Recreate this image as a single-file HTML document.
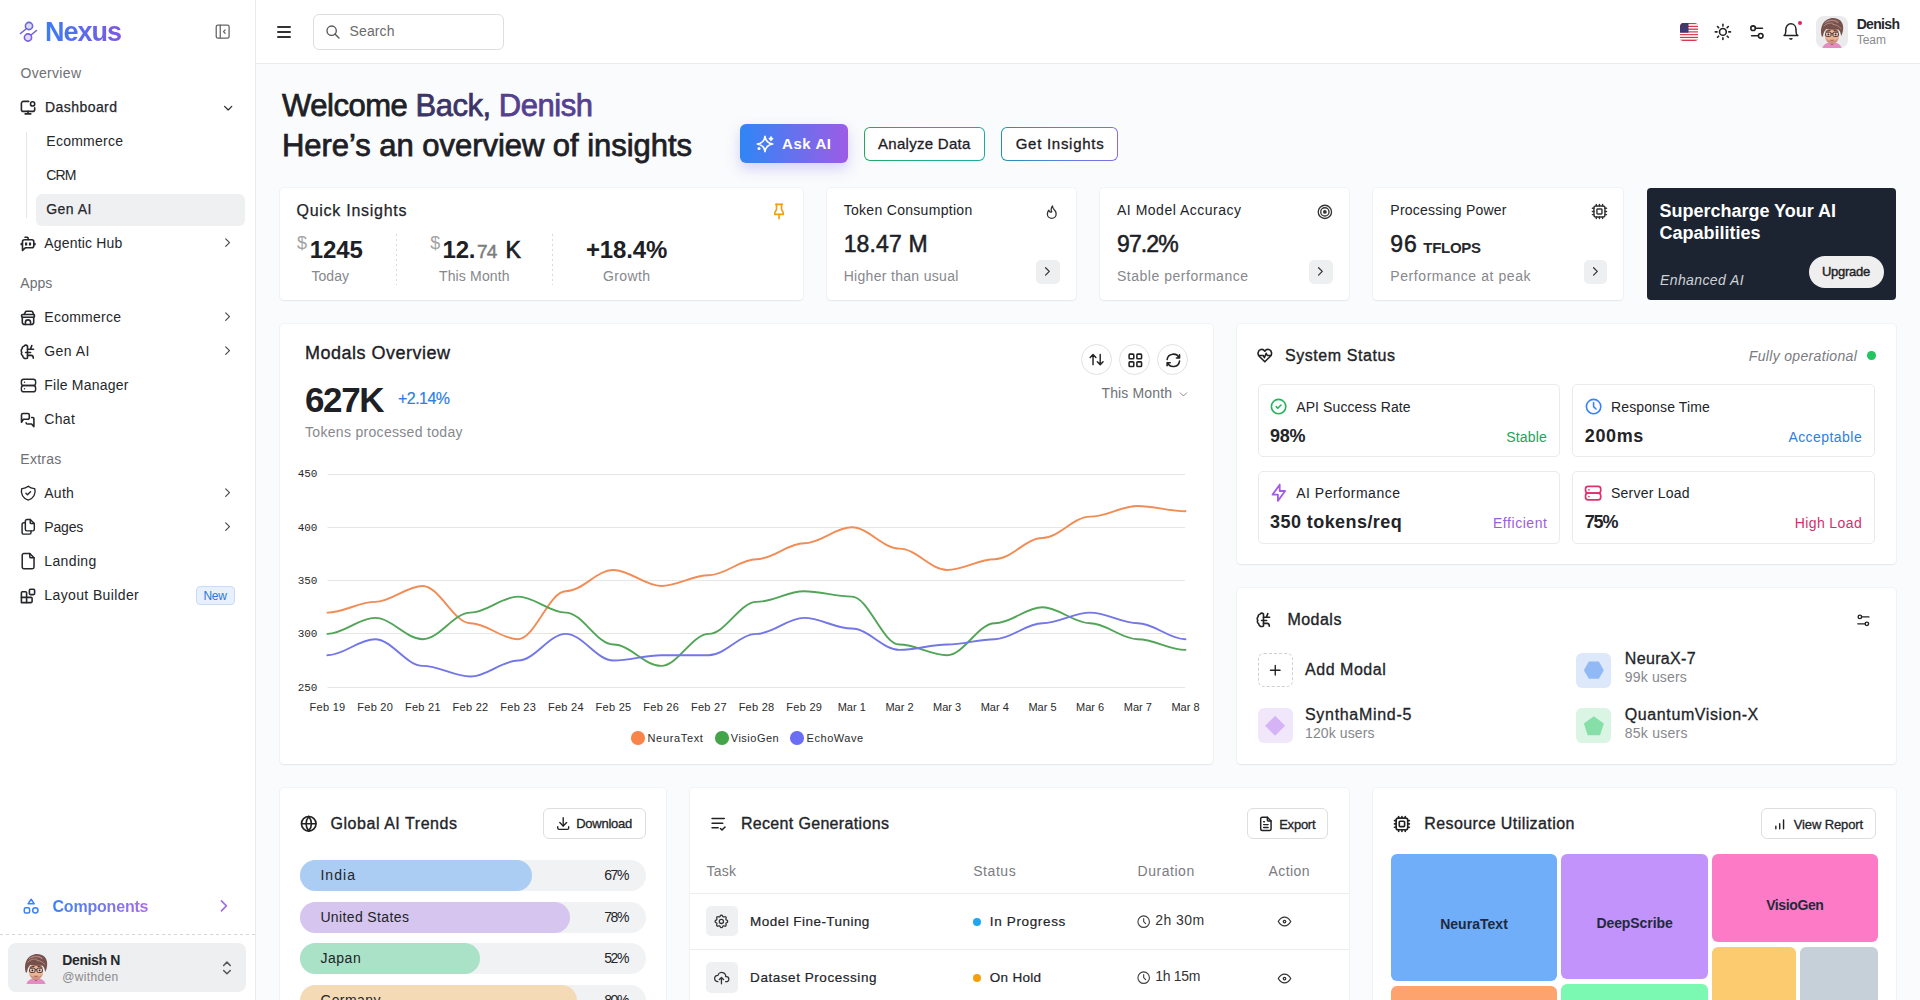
<!DOCTYPE html><html><head><meta charset="utf-8"><title>Nexus Dashboard</title><style>html,body{margin:0;padding:0;}body{width:1920px;height:1000px;overflow:hidden;position:relative;background:#fafbfc;font-family:"Liberation Sans",sans-serif;}.t{position:absolute;white-space:nowrap;}</style></head><body><div style="position:absolute;left:0.00px;top:0.00px;width:256.00px;height:1000.00px;background:#fff;border-right:1px solid #ebebeb;box-sizing:border-box;"></div><svg style="position:absolute;left:18.00px;top:20.00px;width:22px;height:24px;overflow:visible;" viewBox="0 0 22 24"><line x1="26" y1="29" x2="20.5" y2="33.5" stroke="#6a63e0" stroke-width="1.6" stroke-linecap="round" transform="translate(-18,-20)"/><line x1="31" y1="35" x2="36.5" y2="30.5" stroke="#6a63e0" stroke-width="1.6" stroke-linecap="round" transform="translate(-18,-20)"/><circle cx="11" cy="6" r="3.6" fill="#dcdcfa" stroke="#6a63e0" stroke-width="1.6"/><circle cx="10" cy="17.5" r="3.6" fill="#e3d9f8" stroke="#7a5ee0" stroke-width="1.6"/></svg><div class="t" style="left:45.00px;top:18.64px;font-family:'Liberation Sans', sans-serif;font-size:27px;line-height:27px;font-weight:700;color:#1c2024;letter-spacing:-1.012px;background:linear-gradient(90deg,#3b7cf6,#7d58e4);-webkit-background-clip:text;background-clip:text;color:transparent;"><span>Nexus</span></div><svg style="position:absolute;left:213.33px;top:21.83px;width:19.33px;height:19.33px;overflow:visible;color:#666;" viewBox="0 0 24 24" fill="none" stroke="#666" stroke-width="1.6" stroke-linecap="round" stroke-linejoin="round"><rect x="4" y="4" width="16" height="16" rx="2"/><path d="M9 4v16"/><path d="M15 10l-2 2l2 2"/></svg><div class="t" style="left:20.50px;top:66.15px;font-family:'Liberation Sans', sans-serif;font-size:14px;line-height:14px;font-weight:400;color:#6e7073;letter-spacing:0.306px;"><span>Overview</span></div><svg style="position:absolute;left:16.00px;top:96.00px;width:24.00px;height:24.00px;overflow:visible" viewBox="0 0 24 24" fill="none" stroke="#25272b" stroke-width="1.600" stroke-linecap="round" stroke-linejoin="round"><path d="M12.7 5.4H7.4a2 2 0 0 0-2 2v6a2 2 0 0 0 2 2h9.3a2 2 0 0 0 2-2v-1.6"/><circle cx="16.6" cy="7.9" r="2.1"/><path d="M12 15.4v2.5M9.1 17.9h5.7"/></svg><div class="t" style="left:45.00px;top:100.15px;font-family:'Liberation Sans', sans-serif;font-size:14px;line-height:14px;font-weight:400;color:#25272b;letter-spacing:0.438px;-webkit-text-stroke:0.25px #25272b;"><span>Dashboard</span></div><svg style="position:absolute;left:220.82px;top:100.82px;width:14.36px;height:14.36px;overflow:visible;color:#25272b;" viewBox="0 0 24 24" fill="none" stroke="#25272b" stroke-width="2" stroke-linecap="round" stroke-linejoin="round"><path d="M6 9l6 6l6-6"/></svg><div style="position:absolute;left:26.00px;top:132.00px;width:1.00px;height:86.00px;background:#e6e6e6;"></div><div style="position:absolute;left:36.00px;top:194.00px;width:209.00px;height:31.50px;background:#eff0f2;border-radius:6px;"></div><div class="t" style="left:46.30px;top:134.15px;font-family:'Liberation Sans', sans-serif;font-size:14px;line-height:14px;font-weight:400;color:#25272b;letter-spacing:0.252px;"><span>Ecommerce</span></div><div class="t" style="left:46.30px;top:168.15px;font-family:'Liberation Sans', sans-serif;font-size:14px;line-height:14px;font-weight:400;color:#25272b;letter-spacing:-0.945px;"><span>CRM</span></div><div class="t" style="left:46.30px;top:202.15px;font-family:'Liberation Sans', sans-serif;font-size:14px;line-height:14px;font-weight:400;color:#25272b;letter-spacing:0.438px;-webkit-text-stroke:0.25px #25272b;"><span>Gen AI</span></div><svg style="position:absolute;left:16.00px;top:232.00px;width:24.00px;height:24.00px;overflow:visible" viewBox="0 0 24 24" fill="none" stroke="#25272b" stroke-width="1.600" stroke-linecap="round" stroke-linejoin="round"><path d="M6.5 18.5V9.7a2 2 0 0 1 2-2h7.3a2 2 0 0 1 2 2v4.1a2 2 0 0 1-2 2h-6.5z"/><path d="M9 5.3h2.3q.8 0 .8.8v1.5"/><path d="M10.1 11.7v.6M14 11.7v.6" stroke-width="2.2" stroke-linecap="square"/><path d="M5.3 11.5v1.3M18.9 11.5v1.3"/></svg><div class="t" style="left:44.30px;top:236.15px;font-family:'Liberation Sans', sans-serif;font-size:14px;line-height:14px;font-weight:400;color:#25272b;letter-spacing:0.172px;"><span>Agentic Hub</span></div><svg style="position:absolute;left:220.39px;top:235.39px;width:15.21px;height:15.21px;overflow:visible;color:#444;" viewBox="0 0 24 24" fill="none" stroke="#444" stroke-width="1.8" stroke-linecap="round" stroke-linejoin="round"><path d="M9 6l6 6l-6 6"/></svg><div class="t" style="left:20.30px;top:276.15px;font-family:'Liberation Sans', sans-serif;font-size:14px;line-height:14px;font-weight:400;color:#6e7073;letter-spacing:0.026px;"><span>Apps</span></div><svg style="position:absolute;left:16.00px;top:306.00px;width:24.00px;height:24.00px;overflow:visible" viewBox="0 0 24 24" fill="none" stroke="#25272b" stroke-width="1.600" stroke-linecap="round" stroke-linejoin="round"><path d="M8.2 8.5L9.6 5.6Q9.8 5.3 10.2 5.3H15.8Q16.2 5.3 16.4 5.6L17.8 8.5"/><path d="M6.7 8.5H17.3a1.2 1.2 0 0 1 1.2 1.2v.4a1.2 1.2 0 0 1-1.2 1.2H6.7a1.2 1.2 0 0 1-1.2-1.2v-.4a1.2 1.2 0 0 1 1.2-1.2z"/><path d="M6.3 11.3V16.3a2.2 2.2 0 0 0 2.2 2.2h7a2.2 2.2 0 0 0 2.2-2.2V11.3"/><path d="M9.4 18.5V16.5a2.6 2.6 0 0 1 5.2 0V18.5"/></svg><div class="t" style="left:44.30px;top:310.15px;font-family:'Liberation Sans', sans-serif;font-size:14px;line-height:14px;font-weight:400;color:#25272b;letter-spacing:0.252px;"><span>Ecommerce</span></div><svg style="position:absolute;left:220.39px;top:309.39px;width:15.21px;height:15.21px;overflow:visible;color:#444;" viewBox="0 0 24 24" fill="none" stroke="#444" stroke-width="1.8" stroke-linecap="round" stroke-linejoin="round"><path d="M9 6l6 6l-6 6"/></svg><svg style="position:absolute;left:16.00px;top:340.00px;width:24.00px;height:24.00px;overflow:visible" viewBox="0 0 24 24" fill="none" stroke="#25272b" stroke-width="1.600" stroke-linecap="round" stroke-linejoin="round"><path d="M11.5 6C10.5 4.9 8.6 4.8 8 6.2C6.6 6.4 5.9 7.6 6.2 8.7C5 9.5 4.9 11.3 5.8 12.2C5 13.4 5.3 15.2 6.6 15.6C6.8 17.3 8.5 18.9 10 18.5C10.8 18.6 11.3 18.2 11.5 17.8Z"/><path d="M11.5 9.2H17.6M14.4 9.2L15.8 5.6M9.6 12.5H14.6M11.5 15.4H15.3Q17.3 15.4 17.3 18.2"/></svg><div class="t" style="left:44.30px;top:344.15px;font-family:'Liberation Sans', sans-serif;font-size:14px;line-height:14px;font-weight:400;color:#25272b;letter-spacing:0.438px;"><span>Gen AI</span></div><svg style="position:absolute;left:220.39px;top:343.39px;width:15.21px;height:15.21px;overflow:visible;color:#444;" viewBox="0 0 24 24" fill="none" stroke="#444" stroke-width="1.8" stroke-linecap="round" stroke-linejoin="round"><path d="M9 6l6 6l-6 6"/></svg><svg style="position:absolute;left:18.50px;top:375.50px;width:19.00px;height:19.00px;overflow:visible;color:#25272b;" viewBox="0 0 24 24" fill="none" stroke="#25272b" stroke-width="1.8" stroke-linecap="round" stroke-linejoin="round"><rect x="3" y="4" width="18" height="8" rx="3"/><rect x="3" y="12" width="18" height="8" rx="3"/><path d="M7 8v.01M7 16v.01"/></svg><div class="t" style="left:44.30px;top:378.15px;font-family:'Liberation Sans', sans-serif;font-size:14px;line-height:14px;font-weight:400;color:#25272b;letter-spacing:0.209px;"><span>File Manager</span></div><svg style="position:absolute;left:16.00px;top:408.00px;width:24.00px;height:24.00px;overflow:visible" viewBox="0 0 24 24" fill="none" stroke="#25272b" stroke-width="1.600" stroke-linecap="round" stroke-linejoin="round"><path d="M5.5 14.2V7a1.5 1.5 0 0 1 1.5-1.5h4.8a1.5 1.5 0 0 1 1.5 1.5v2.8a1.5 1.5 0 0 1-1.5 1.5h-4.4z"/><path d="M15.6 9.5h1.1a1.2 1.2 0 0 1 1.2 1.2V18.6l-2.3-2.6H11.4a1.3 1.3 0 0 1-1.3-1.3"/></svg><div class="t" style="left:44.30px;top:412.15px;font-family:'Liberation Sans', sans-serif;font-size:14px;line-height:14px;font-weight:400;color:#25272b;letter-spacing:0.307px;"><span>Chat</span></div><div class="t" style="left:20.30px;top:452.15px;font-family:'Liberation Sans', sans-serif;font-size:14px;line-height:14px;font-weight:400;color:#6e7073;letter-spacing:0.263px;"><span>Extras</span></div><svg style="position:absolute;left:18.76px;top:483.76px;width:18.47px;height:18.47px;overflow:visible;color:#25272b;" viewBox="0 0 24 24" fill="none" stroke="#25272b" stroke-width="1.8" stroke-linecap="round" stroke-linejoin="round"><path d="M12 3a12 12 0 0 0 8.5 3a12 12 0 0 1-8.5 15a12 12 0 0 1-8.5-15a12 12 0 0 0 8.5-3"/><path d="M9 12l2 2l4-4"/></svg><div class="t" style="left:44.30px;top:486.15px;font-family:'Liberation Sans', sans-serif;font-size:14px;line-height:14px;font-weight:400;color:#25272b;letter-spacing:0.229px;"><span>Auth</span></div><svg style="position:absolute;left:220.39px;top:485.39px;width:15.21px;height:15.21px;overflow:visible;color:#444;" viewBox="0 0 24 24" fill="none" stroke="#444" stroke-width="1.8" stroke-linecap="round" stroke-linejoin="round"><path d="M9 6l6 6l-6 6"/></svg><svg style="position:absolute;left:17.80px;top:517.21px;width:19.59px;height:19.59px;overflow:visible;color:#25272b;" viewBox="0 0 24 24" fill="none" stroke="#25272b" stroke-width="1.8" stroke-linecap="round" stroke-linejoin="round"><path d="M15 3v4a1 1 0 0 0 1 1h4"/><path d="M18 17h-7a2 2 0 0 1-2-2v-10a2 2 0 0 1 2-2h4l5 5v7a2 2 0 0 1-2 2z"/><path d="M16 17v2a2 2 0 0 1-2 2h-7a2 2 0 0 1-2-2v-10a2 2 0 0 1 2-2h2"/></svg><div class="t" style="left:44.30px;top:520.15px;font-family:'Liberation Sans', sans-serif;font-size:14px;line-height:14px;font-weight:400;color:#25272b;letter-spacing:-0.176px;"><span>Pages</span></div><svg style="position:absolute;left:220.39px;top:519.39px;width:15.21px;height:15.21px;overflow:visible;color:#444;" viewBox="0 0 24 24" fill="none" stroke="#444" stroke-width="1.8" stroke-linecap="round" stroke-linejoin="round"><path d="M9 6l6 6l-6 6"/></svg><svg style="position:absolute;left:17.88px;top:550.88px;width:20.25px;height:20.25px;overflow:visible;color:#25272b;" viewBox="0 0 24 24" fill="none" stroke="#25272b" stroke-width="1.8" stroke-linecap="round" stroke-linejoin="round"><path d="M14 3v4a1 1 0 0 0 1 1h4"/><path d="M17 21h-10a2 2 0 0 1-2-2v-14a2 2 0 0 1 2-2h7l5 5v11a2 2 0 0 1-2 2z"/></svg><div class="t" style="left:44.30px;top:554.15px;font-family:'Liberation Sans', sans-serif;font-size:14px;line-height:14px;font-weight:400;color:#25272b;letter-spacing:0.362px;"><span>Landing</span></div><svg style="position:absolute;left:16.00px;top:584.00px;width:24.00px;height:24.00px;overflow:visible" viewBox="0 0 24 24" fill="none" stroke="#25272b" stroke-width="1.600" stroke-linecap="round" stroke-linejoin="round"><path d="M5.4 18.6V8.7a1 1 0 0 1 1-1h3.2a1 1 0 0 1 1 1V13.4H15.1a1 1 0 0 1 1 1v3.2a1 1 0 0 1-1 1z"/><path d="M5.4 13.4H10.6V18.6"/><rect x="13.4" y="5.2" width="5.2" height="5.4" rx="1"/></svg><div class="t" style="left:44.30px;top:588.15px;font-family:'Liberation Sans', sans-serif;font-size:14px;line-height:14px;font-weight:400;color:#25272b;letter-spacing:0.383px;"><span>Layout Builder</span></div><div style="position:absolute;left:196.20px;top:586.30px;width:38.70px;height:18.90px;background:#e7f0fc;border:1px solid #c8dcf6;border-radius:4px;box-sizing:border-box;"></div><div class="t" style="left:203.40px;top:589.84px;font-family:'Liberation Sans', sans-serif;font-size:12px;line-height:12px;font-weight:400;color:#2b78d6;letter-spacing:-0.208px;"><span>New</span></div><svg style="position:absolute;left:21.60px;top:896.85px;width:18.30px;height:18.30px;overflow:visible;color:#3b82f6;" viewBox="0 0 24 24" fill="none" stroke="#3b82f6" stroke-width="2" stroke-linecap="round" stroke-linejoin="round"><path d="M12 3l4 6h-8z"/><rect x="3" y="14" width="7" height="7" rx="2"/><circle cx="17.5" cy="17.5" r="3.5"/></svg><div class="t" style="left:52.50px;top:898.66px;font-family:'Liberation Sans', sans-serif;font-size:16px;line-height:16px;font-weight:700;color:#1c2024;letter-spacing:-0.198px;background:linear-gradient(90deg,#3b82f6,#a66ee8);-webkit-background-clip:text;background-clip:text;color:transparent;"><span>Components</span></div><svg style="position:absolute;left:214.18px;top:896.13px;width:19.84px;height:19.84px;overflow:visible;color:#a070e0;" viewBox="0 0 24 24" fill="none" stroke="#a070e0" stroke-width="2" stroke-linecap="round" stroke-linejoin="round"><path d="M9 6l6 6l-6 6"/></svg><div style="position:absolute;left:0.00px;top:934.00px;width:255.00px;height:1.00px;background-image:linear-gradient(90deg,#d6d6d6 50%,transparent 50%);background-size:6px 1px;"></div><div style="position:absolute;left:8.40px;top:943.30px;width:238.10px;height:49.10px;background:#eeeff1;border-radius:8px;"></div><svg style="position:absolute;left:20.00px;top:951.50px;width:32px;height:32px;overflow:visible;" viewBox="0 0 32 32"><path d="M6.5 32c.8-3.6 3.6-5.6 9.5-5.6s8.7 2 9.5 5.6z" fill="#e38cbf"/><path d="M13 26.6l3 2.6l3-2.6z" fill="#9a4b6e"/><rect x="13.3" y="22" width="5.4" height="5" fill="#d69a82"/><ellipse cx="16" cy="19.6" rx="7.2" ry="8.4" fill="#eab394"/><path d="M9.5 22c1 4 3.5 5.8 6.5 5.8s5.5-1.8 6.5-5.8c-1.5 2-3.5 2.6-6.5 2.6s-5-.6-6.5-2.6z" fill="#b77a6a" opacity=".55"/><path d="M5.8 20.5C3.6 13 6 4.2 14 2.4c7-1.5 13.4 2.2 13.2 9.6c0 3-1 6-2 8c-.6-3.3-1.4-5.4-3-6.4c-3.5.4-8.8.2-12-.6c-1.8 1.6-2.8 4.2-3.2 7.4z" fill="#76504b"/><path d="M9 7c3-3 9-4 13-1M11 5.5c3.5-1.6 8-1.2 11 1.2M8 10c2-2.5 6-3.6 9-2.8M17 8.5c3 0 6 1.5 8 4" stroke="#b58a84" stroke-width="1" fill="none" stroke-linecap="round"/><path d="M10 15.2l4-.8M18 14.4l4 .8" stroke="#5b3a3a" stroke-width="1.1" stroke-linecap="round"/><rect x="9.6" y="16.2" width="5.4" height="4.2" rx="1.2" fill="#f3e4e4" fill-opacity=".5" stroke="#4a3333" stroke-width="1"/><rect x="17" y="16.2" width="5.4" height="4.2" rx="1.2" fill="#f3e4e4" fill-opacity=".5" stroke="#4a3333" stroke-width="1"/><path d="M15 17.6h2" stroke="#4a3333" stroke-width=".9"/><circle cx="12.4" cy="18.3" r=".9" fill="#2b2020"/><circle cx="19.6" cy="18.3" r=".9" fill="#2b2020"/><path d="M14.6 24.2c.9.3 1.9.3 2.8 0" stroke="#a25a52" stroke-width=".9" fill="none" stroke-linecap="round"/></svg><div class="t" style="left:62.30px;top:952.95px;font-family:'Liberation Sans', sans-serif;font-size:14px;line-height:14px;font-weight:700;color:#26282c;letter-spacing:-0.384px;"><span>Denish N</span></div><div class="t" style="left:62.30px;top:970.54px;font-family:'Liberation Sans', sans-serif;font-size:12px;line-height:12px;font-weight:400;color:#8a8a8a;letter-spacing:0.350px;"><span>@withden</span></div><svg style="position:absolute;left:217.29px;top:958.04px;width:19.92px;height:19.92px;overflow:visible;color:#555;" viewBox="0 0 24 24" fill="none" stroke="#555" stroke-width="1.8" stroke-linecap="round" stroke-linejoin="round"><path d="M8 9l4-4l4 4M16 15l-4 4l-4-4"/></svg><div style="position:absolute;left:256.00px;top:0.00px;width:1664.00px;height:64.00px;background:#fff;border-bottom:1px solid #ebebeb;box-sizing:border-box;"></div><div style="position:absolute;left:276.80px;top:26.00px;width:14.40px;height:1.80px;background:#333;border-radius:1px;"></div><div style="position:absolute;left:276.80px;top:31.10px;width:14.40px;height:1.80px;background:#333;border-radius:1px;"></div><div style="position:absolute;left:276.80px;top:36.20px;width:14.40px;height:1.80px;background:#333;border-radius:1px;"></div><div style="position:absolute;left:312.50px;top:14.20px;width:191.50px;height:35.40px;border:1px solid #dedede;border-radius:6px;box-sizing:border-box;background:#fff;"></div><svg style="position:absolute;left:324.77px;top:23.97px;width:15.96px;height:15.96px;overflow:visible;color:#555;" viewBox="0 0 24 24" fill="none" stroke="#555" stroke-width="2" stroke-linecap="round" stroke-linejoin="round"><circle cx="10" cy="10" r="7"/><path d="M21 21l-6-6"/></svg><div class="t" style="left:349.50px;top:24.15px;font-family:'Liberation Sans', sans-serif;font-size:14px;line-height:14px;font-weight:400;color:#6b6b6b;letter-spacing:0.128px;"><span>Search</span></div><svg style="position:absolute;left:1680.00px;top:23.00px;width:18px;height:18px;overflow:visible;" viewBox="0 0 18 18"><defs><clipPath id="fc"><rect x="0" y="0" width="18" height="18" rx="3.5"/></clipPath></defs><g clip-path="url(#fc)"><rect x="0" y="0.000" width="18" height="1.385" fill="#d8364a"/><rect x="0" y="1.385" width="18" height="1.385" fill="#fff"/><rect x="0" y="2.769" width="18" height="1.385" fill="#d8364a"/><rect x="0" y="4.154" width="18" height="1.385" fill="#fff"/><rect x="0" y="5.538" width="18" height="1.385" fill="#d8364a"/><rect x="0" y="6.923" width="18" height="1.385" fill="#fff"/><rect x="0" y="8.308" width="18" height="1.385" fill="#d8364a"/><rect x="0" y="9.692" width="18" height="1.385" fill="#fff"/><rect x="0" y="11.077" width="18" height="1.385" fill="#d8364a"/><rect x="0" y="12.462" width="18" height="1.385" fill="#fff"/><rect x="0" y="13.846" width="18" height="1.385" fill="#d8364a"/><rect x="0" y="15.231" width="18" height="1.385" fill="#fff"/><rect x="0" y="16.615" width="18" height="1.385" fill="#d8364a"/><rect x="0" y="0" width="8.5" height="9.7" fill="#3c3b6e"/></g></svg><svg style="position:absolute;left:1711.00px;top:20.00px;width:24.00px;height:24.00px;overflow:visible" viewBox="0 0 24 24" fill="none" stroke="#222" stroke-width="1.600" stroke-linecap="round" stroke-linejoin="round"><circle cx="11.9" cy="11.9" r="3.4"/><path d="M11.9 4.3v1.7M11.9 17.8v1.7M4.3 11.9h1.7M17.8 11.9h1.7M6.5 6.5l1.1 1.1M16.2 16.2l1.1 1.1M6.5 17.3l1.1-1.1M16.2 7.6l1.1-1.1"/></svg><svg style="position:absolute;left:1746.00px;top:20.00px;width:24.00px;height:24.00px;overflow:visible" viewBox="0 0 24 24" fill="none" stroke="#222" stroke-width="1.600" stroke-linecap="round" stroke-linejoin="round"><circle cx="7.1" cy="8.2" r="2.3"/><path d="M9.4 8.2H16.5"/><circle cx="14.7" cy="15.8" r="2.3"/><path d="M5.6 15.8H12.4"/></svg><svg style="position:absolute;left:1779.00px;top:20.00px;width:24.00px;height:24.00px;overflow:visible" viewBox="0 0 24 24" fill="none" stroke="#222" stroke-width="1.500" stroke-linecap="round" stroke-linejoin="round"><path d="M5.1 15.5C6.5 14.6 6.8 13 6.8 11.2V9.5C6.8 6.2 9 3.8 11.9 3.8C14.8 3.8 17 6.2 17 9.5V11.2C17 13 17.3 14.6 18.8 15.5Z"/><path d="M10.9 18.7Q11.9 19.5 12.9 18.7"/></svg><div style="position:absolute;left:1797.80px;top:20.80px;width:4.40px;height:4.40px;background:#e0245e;border-radius:50%;"></div><svg style="position:absolute;left:1816.00px;top:16.00px;width:32px;height:32px;overflow:visible;" viewBox="0 0 32 32"><rect x="0" y="0" width="32" height="32" rx="8" fill="#ebebed"/><path d="M6.5 32c.8-3.6 3.6-5.6 9.5-5.6s8.7 2 9.5 5.6z" fill="#e38cbf"/><path d="M13 26.6l3 2.6l3-2.6z" fill="#9a4b6e"/><rect x="13.3" y="22" width="5.4" height="5" fill="#d69a82"/><ellipse cx="16" cy="19.6" rx="7.2" ry="8.4" fill="#eab394"/><path d="M9.5 22c1 4 3.5 5.8 6.5 5.8s5.5-1.8 6.5-5.8c-1.5 2-3.5 2.6-6.5 2.6s-5-.6-6.5-2.6z" fill="#b77a6a" opacity=".55"/><path d="M5.8 20.5C3.6 13 6 4.2 14 2.4c7-1.5 13.4 2.2 13.2 9.6c0 3-1 6-2 8c-.6-3.3-1.4-5.4-3-6.4c-3.5.4-8.8.2-12-.6c-1.8 1.6-2.8 4.2-3.2 7.4z" fill="#76504b"/><path d="M9 7c3-3 9-4 13-1M11 5.5c3.5-1.6 8-1.2 11 1.2M8 10c2-2.5 6-3.6 9-2.8M17 8.5c3 0 6 1.5 8 4" stroke="#b58a84" stroke-width="1" fill="none" stroke-linecap="round"/><path d="M10 15.2l4-.8M18 14.4l4 .8" stroke="#5b3a3a" stroke-width="1.1" stroke-linecap="round"/><rect x="9.6" y="16.2" width="5.4" height="4.2" rx="1.2" fill="#f3e4e4" fill-opacity=".5" stroke="#4a3333" stroke-width="1"/><rect x="17" y="16.2" width="5.4" height="4.2" rx="1.2" fill="#f3e4e4" fill-opacity=".5" stroke="#4a3333" stroke-width="1"/><path d="M15 17.6h2" stroke="#4a3333" stroke-width=".9"/><circle cx="12.4" cy="18.3" r=".9" fill="#2b2020"/><circle cx="19.6" cy="18.3" r=".9" fill="#2b2020"/><path d="M14.6 24.2c.9.3 1.9.3 2.8 0" stroke="#a25a52" stroke-width=".9" fill="none" stroke-linecap="round"/></svg><div class="t" style="left:1856.70px;top:17.35px;font-family:'Liberation Sans', sans-serif;font-size:14px;line-height:14px;font-weight:700;color:#26282c;letter-spacing:-0.678px;"><span>Denish</span></div><div class="t" style="left:1856.70px;top:34.04px;font-family:'Liberation Sans', sans-serif;font-size:12px;line-height:12px;font-weight:400;color:#8a8a8a;letter-spacing:-0.015px;"><span>Team</span></div><div class="t" style="left:282.00px;top:89.76px;font-family:'Liberation Sans', sans-serif;font-size:31px;line-height:31px;font-weight:400;color:#1c2024;letter-spacing:-0.469px;"><span><span style="color:#1d2025;-webkit-text-stroke:0.75px #1d2025">Welcome </span><span style="color:#3b3466;-webkit-text-stroke:0.75px #3b3466">Back, </span><span style="color:#54408f;-webkit-text-stroke:0.75px #54408f">Denish</span></span></div><div class="t" style="left:282.00px;top:129.76px;font-family:'Liberation Sans', sans-serif;font-size:31px;line-height:31px;font-weight:400;color:#1d2025;letter-spacing:-0.043px;-webkit-text-stroke:0.75px #1d2025;"><span>Here’s an overview of insights</span></div><div style="position:absolute;left:740.30px;top:124.30px;width:107.40px;height:39.10px;background:linear-gradient(90deg,#2f86f6,#9d5ce6);border-radius:6px;box-shadow:0 6px 14px rgba(120,100,240,0.28);"></div><svg style="position:absolute;left:0;top:0;width:1920px;height:1000px;overflow:visible" viewBox="0 0 1920 1000"><path d="M765 136.4Q765.9 143.1 772.8 144Q765.9 144.9 765 151.6Q764.1 144.9 757.2 144Q764.1 143.1 765 136.4Z" fill="none" stroke="#fff" stroke-width="1.6" stroke-linejoin="round"/><path d="M771 136.5Q771.4 138.3 773.2 138.7Q771.4 139.1 771 140.9Q770.6 139.1 768.8 138.7Q770.6 138.3 771 136.5Z" fill="#fff" stroke="#fff" stroke-width="1" stroke-linejoin="round"/><circle cx="759" cy="148.5" r="1.5" fill="#fff"/></svg><div class="t" style="left:782.00px;top:136.30px;font-family:'Liberation Sans', sans-serif;font-size:15px;line-height:15px;font-weight:700;color:#fff;letter-spacing:0.572px;"><span>Ask AI</span></div><div style="position:absolute;left:864.10px;top:127.00px;width:120.70px;height:33.80px;border-radius:6px;background:linear-gradient(#fff,#fff) padding-box,linear-gradient(90deg,#23a862,#1fae8e 60%,#20a8a8) border-box;border:1.3px solid transparent;box-sizing:border-box;"></div><div class="t" style="left:878.00px;top:136.30px;font-family:'Liberation Sans', sans-serif;font-size:15px;line-height:15px;font-weight:400;color:#1d2025;letter-spacing:0.280px;-webkit-text-stroke:0.3px #1d2025;"><span>Analyze Data</span></div><div style="position:absolute;left:1001.20px;top:127.00px;width:116.40px;height:33.80px;border-radius:6px;background:linear-gradient(#fff,#fff) padding-box,linear-gradient(90deg,#1f95a8,#5f7ee8 55%,#8070e0) border-box;border:1.3px solid transparent;box-sizing:border-box;"></div><div class="t" style="left:1015.70px;top:136.30px;font-family:'Liberation Sans', sans-serif;font-size:15px;line-height:15px;font-weight:400;color:#1d2025;letter-spacing:0.723px;-webkit-text-stroke:0.3px #1d2025;"><span>Get Insights</span></div><div style="position:absolute;left:280.00px;top:188.00px;width:522.67px;height:112.00px;background:#fff;border-radius:4px;box-shadow:0 0 0 1px rgba(20,20,40,0.03),0 1px 2px rgba(20,20,40,0.06);"></div><div class="t" style="left:296.50px;top:203.46px;font-family:'Liberation Sans', sans-serif;font-size:16px;line-height:16px;font-weight:400;color:#222428;letter-spacing:0.732px;-webkit-text-stroke:0.25px #222428;"><span>Quick Insights</span></div><svg style="position:absolute;left:768.96px;top:201.09px;width:20.08px;height:20.08px;overflow:visible;color:#f5a00b;" viewBox="0 0 24 24" fill="none" stroke="#f5a00b" stroke-width="2" stroke-linecap="round" stroke-linejoin="round"><path d="M9 4v6l-2 4v2h10v-2l-2-4v-6"/><path d="M12 16v5M8 4h8"/></svg><div class="t" style="left:297.00px;top:233.76px;font-family:'Liberation Sans', sans-serif;font-size:18px;line-height:18px;font-weight:400;color:#a3a3a3;"><span>$</span></div><div class="t" style="left:309.80px;top:237.98px;font-family:'Liberation Sans', sans-serif;font-size:24px;line-height:24px;font-weight:700;color:#1d2025;letter-spacing:-0.130px;"><span>1245</span></div><div class="t" style="left:30.23px;width:600px;text-align:center;top:269.35px;font-family:'Liberation Sans', sans-serif;font-size:14px;line-height:14px;font-weight:400;color:#86888c;letter-spacing:0.060px;"><span>Today</span></div><div style="position:absolute;left:396.00px;top:234.00px;width:1.00px;height:51.00px;background-image:linear-gradient(180deg,#d9d9d9 50%,transparent 50%);background-size:1px 5px;"></div><div class="t" style="left:430.30px;top:233.76px;font-family:'Liberation Sans', sans-serif;font-size:18px;line-height:18px;font-weight:400;color:#a3a3a3;"><span>$</span></div><div class="t" style="left:442.50px;top:237.98px;font-family:'Liberation Sans', sans-serif;font-size:24px;line-height:24px;font-weight:700;color:#1d2025;letter-spacing:-0.188px;"><span>12.</span></div><div class="t" style="left:477.00px;top:242.22px;font-family:'Liberation Sans', sans-serif;font-size:19px;line-height:19px;font-weight:400;color:#7d7d7d;letter-spacing:-0.900px;-webkit-text-stroke:0.5px #7d7d7d;"><span>74</span></div><div class="t" style="left:505.50px;top:238.83px;font-family:'Liberation Sans', sans-serif;font-size:23px;line-height:23px;font-weight:400;color:#1d2025;-webkit-text-stroke:0.7px #1d2025;"><span>K</span></div><div class="t" style="left:174.38px;width:600px;text-align:center;top:269.35px;font-family:'Liberation Sans', sans-serif;font-size:14px;line-height:14px;font-weight:400;color:#86888c;letter-spacing:0.161px;"><span>This Month</span></div><div style="position:absolute;left:552.00px;top:234.00px;width:1.00px;height:51.00px;background-image:linear-gradient(180deg,#d9d9d9 50%,transparent 50%);background-size:1px 5px;"></div><div class="t" style="left:586.00px;top:237.98px;font-family:'Liberation Sans', sans-serif;font-size:24px;line-height:24px;font-weight:700;color:#1d2025;letter-spacing:-0.156px;"><span>+18.4%</span></div><div class="t" style="left:326.69px;width:600px;text-align:center;top:269.35px;font-family:'Liberation Sans', sans-serif;font-size:14px;line-height:14px;font-weight:400;color:#86888c;letter-spacing:0.375px;"><span>Growth</span></div><div style="position:absolute;left:826.67px;top:188.00px;width:249.33px;height:112.00px;background:#fff;border-radius:4px;box-shadow:0 0 0 1px rgba(20,20,40,0.03),0 1px 2px rgba(20,20,40,0.06);"></div><div class="t" style="left:843.67px;top:203.15px;font-family:'Liberation Sans', sans-serif;font-size:14px;line-height:14px;font-weight:400;color:#222428;letter-spacing:0.303px;"><span>Token Consumption</span></div><svg style="position:absolute;left:1043.25px;top:202.98px;width:17.50px;height:17.50px;overflow:visible;color:#333;transform:scaleX(-1);" viewBox="0 0 24 24" fill="none" stroke="#333" stroke-width="1.8" stroke-linecap="round" stroke-linejoin="round"><path d="M12 12c2-2.96 0-7-1-8c0 3.038-1.773 4.741-3 6c-1.226 1.26-2 3.24-2 5a6 6 0 1 0 12 0c0-1.532-1.056-3.94-2-5c-1.786 3-2.791 3-4 2z"/></svg><div class="t" style="left:843.67px;top:232.83px;font-family:'Liberation Sans', sans-serif;font-size:23px;line-height:23px;font-weight:400;color:#1d2025;letter-spacing:0.148px;-webkit-text-stroke:0.5px #1d2025;"><span>18.47 M</span></div><div class="t" style="left:843.67px;top:269.15px;font-family:'Liberation Sans', sans-serif;font-size:14px;line-height:14px;font-weight:400;color:#86888c;letter-spacing:0.309px;"><span>Higher than usual</span></div><div style="position:absolute;left:1036.20px;top:260.20px;width:23.50px;height:23.40px;background:#eeeff1;border-radius:5px;"></div><svg style="position:absolute;left:1040.46px;top:264.46px;width:14.87px;height:14.87px;overflow:visible;color:#333;" viewBox="0 0 24 24" fill="none" stroke="#333" stroke-width="2" stroke-linecap="round" stroke-linejoin="round"><path d="M9 6l6 6l-6 6"/></svg><div style="position:absolute;left:1100.00px;top:188.00px;width:249.33px;height:112.00px;background:#fff;border-radius:4px;box-shadow:0 0 0 1px rgba(20,20,40,0.03),0 1px 2px rgba(20,20,40,0.06);"></div><div class="t" style="left:1117.00px;top:203.15px;font-family:'Liberation Sans', sans-serif;font-size:14px;line-height:14px;font-weight:400;color:#222428;letter-spacing:0.504px;"><span>AI Model Accuracy</span></div><svg style="position:absolute;left:1316.12px;top:203.32px;width:17.76px;height:17.76px;overflow:visible;color:#333;" viewBox="0 0 24 24" fill="none" stroke="#333" stroke-width="1.8" stroke-linecap="round" stroke-linejoin="round"><circle cx="12" cy="12" r="1.6" fill="currentColor"/><circle cx="12" cy="12" r="5.6"/><circle cx="12" cy="12" r="9"/></svg><div class="t" style="left:1117.00px;top:232.83px;font-family:'Liberation Sans', sans-serif;font-size:23px;line-height:23px;font-weight:400;color:#1d2025;letter-spacing:-0.905px;-webkit-text-stroke:0.5px #1d2025;"><span>97.2%</span></div><div class="t" style="left:1117.00px;top:269.15px;font-family:'Liberation Sans', sans-serif;font-size:14px;line-height:14px;font-weight:400;color:#86888c;letter-spacing:0.518px;"><span>Stable performance</span></div><div style="position:absolute;left:1309.20px;top:260.20px;width:23.50px;height:23.40px;background:#eeeff1;border-radius:5px;"></div><svg style="position:absolute;left:1313.46px;top:264.46px;width:14.87px;height:14.87px;overflow:visible;color:#333;" viewBox="0 0 24 24" fill="none" stroke="#333" stroke-width="2" stroke-linecap="round" stroke-linejoin="round"><path d="M9 6l6 6l-6 6"/></svg><div style="position:absolute;left:1373.33px;top:188.00px;width:249.33px;height:112.00px;background:#fff;border-radius:4px;box-shadow:0 0 0 1px rgba(20,20,40,0.03),0 1px 2px rgba(20,20,40,0.06);"></div><div class="t" style="left:1390.33px;top:203.15px;font-family:'Liberation Sans', sans-serif;font-size:14px;line-height:14px;font-weight:400;color:#222428;letter-spacing:0.225px;"><span>Processing Power</span></div><svg style="position:absolute;left:1589.55px;top:202.20px;width:18.90px;height:18.90px;overflow:visible;color:#333;" viewBox="0 0 24 24" fill="none" stroke="#333" stroke-width="1.8" stroke-linecap="round" stroke-linejoin="round"><rect x="5" y="5" width="14" height="14" rx="2.5"/><rect x="8.8" y="8.8" width="6.4" height="6.4" rx="1"/><path d="M3 8h2M3 12h2M3 16h2M21 8h-2M21 12h-2M21 16h-2M8 3v2M12 3v2M16 3v2M8 21v-2M12 21v-2M16 21v-2"/></svg><div class="t" style="left:1390.33px;top:233.13px;font-family:'Liberation Sans', sans-serif;font-size:23px;line-height:23px;font-weight:400;color:#1d2025;letter-spacing:0.906px;-webkit-text-stroke:0.5px #1d2025;"><span>96</span></div><div class="t" style="left:1423.30px;top:239.90px;font-family:'Liberation Sans', sans-serif;font-size:15px;line-height:15px;font-weight:700;color:#26282c;letter-spacing:-0.294px;"><span>TFLOPS</span></div><div class="t" style="left:1390.33px;top:269.15px;font-family:'Liberation Sans', sans-serif;font-size:14px;line-height:14px;font-weight:400;color:#86888c;letter-spacing:0.568px;"><span>Performance at peak</span></div><div style="position:absolute;left:1583.60px;top:260.20px;width:23.50px;height:23.40px;background:#eeeff1;border-radius:5px;"></div><svg style="position:absolute;left:1587.86px;top:264.46px;width:14.87px;height:14.87px;overflow:visible;color:#333;" viewBox="0 0 24 24" fill="none" stroke="#333" stroke-width="2" stroke-linecap="round" stroke-linejoin="round"><path d="M9 6l6 6l-6 6"/></svg><div style="position:absolute;left:1646.67px;top:188.00px;width:249.33px;height:112.00px;background:#1c2431;border-radius:4px;"></div><div class="t" style="left:1659.60px;top:201.86px;font-family:'Liberation Sans', sans-serif;font-size:18px;line-height:18px;font-weight:700;color:#fff;letter-spacing:-0.018px;"><span>Supercharge Your AI</span></div><div class="t" style="left:1659.60px;top:223.66px;font-family:'Liberation Sans', sans-serif;font-size:18px;line-height:18px;font-weight:700;color:#fff;letter-spacing:-0.003px;"><span>Capabilities</span></div><div class="t" style="left:1660.00px;top:273.05px;font-family:'Liberation Sans', sans-serif;font-size:14px;line-height:14px;font-weight:400;color:#cfd2d6;font-style:italic;letter-spacing:0.394px;"><span>Enhanced AI</span></div><div style="position:absolute;left:1809.00px;top:256.10px;width:74.70px;height:31.50px;background:#efefef;border-radius:16px;"></div><div class="t" style="left:1822.00px;top:264.70px;font-family:'Liberation Sans', sans-serif;font-size:13px;line-height:13px;font-weight:400;color:#222;letter-spacing:-0.279px;-webkit-text-stroke:0.4px #222;"><span>Upgrade</span></div><div style="position:absolute;left:280.00px;top:324.00px;width:932.67px;height:440.00px;background:#fff;border-radius:4px;box-shadow:0 0 0 1px rgba(20,20,40,0.03),0 1px 2px rgba(20,20,40,0.06);"></div><div class="t" style="left:305.00px;top:344.01px;font-family:'Liberation Sans', sans-serif;font-size:18px;line-height:18px;font-weight:400;color:#1d2025;letter-spacing:0.497px;-webkit-text-stroke:0.35px #1d2025;"><span>Modals Overview</span></div><div class="t" style="left:305.00px;top:382.37px;font-family:'Liberation Sans', sans-serif;font-size:35px;line-height:35px;font-weight:700;color:#1d2025;letter-spacing:-1.391px;"><span>627K</span></div><div class="t" style="left:398.00px;top:391.46px;font-family:'Liberation Sans', sans-serif;font-size:16px;line-height:16px;font-weight:400;color:#2c7fe3;letter-spacing:-0.544px;-webkit-text-stroke:0.2px #2c7fe3;"><span>+2.14%</span></div><div class="t" style="left:305.00px;top:425.15px;font-family:'Liberation Sans', sans-serif;font-size:14px;line-height:14px;font-weight:400;color:#86888c;letter-spacing:0.310px;"><span>Tokens processed today</span></div><div style="position:absolute;left:1081.00px;top:344.20px;width:31.20px;height:31.20px;border:1px solid #e2e2e2;border-radius:50%;box-sizing:border-box;"></div><svg style="position:absolute;left:1088.24px;top:351.39px;width:17.22px;height:17.22px;overflow:visible;color:#222;" viewBox="0 0 24 24" fill="none" stroke="#222" stroke-width="2" stroke-linecap="round" stroke-linejoin="round"><path d="M3 9l4-4l4 4m-4-4v14"/><path d="M21 15l-4 4l-4-4m4 4v-14"/></svg><div style="position:absolute;left:1119.30px;top:344.20px;width:31.20px;height:31.20px;border:1px solid #e2e2e2;border-radius:50%;box-sizing:border-box;"></div><svg style="position:absolute;left:1125.67px;top:350.67px;width:18.67px;height:18.67px;overflow:visible;color:#222;" viewBox="0 0 24 24" fill="none" stroke="#222" stroke-width="2" stroke-linecap="round" stroke-linejoin="round"><rect x="4" y="4" width="6" height="6" rx="1"/><rect x="14" y="4" width="6" height="6" rx="1"/><rect x="4" y="14" width="6" height="6" rx="1"/><rect x="14" y="14" width="6" height="6" rx="1"/></svg><div style="position:absolute;left:1157.10px;top:344.20px;width:31.20px;height:31.20px;border:1px solid #e2e2e2;border-radius:50%;box-sizing:border-box;"></div><svg style="position:absolute;left:1163.67px;top:350.67px;width:18.67px;height:18.67px;overflow:visible;color:#222;transform:scaleX(-1);" viewBox="0 0 24 24" fill="none" stroke="#222" stroke-width="2" stroke-linecap="round" stroke-linejoin="round"><path d="M20 11a8.1 8.1 0 0 0-15.5-2m-.5-4v4h4"/><path d="M4 13a8.1 8.1 0 0 0 15.5 2m.5 4v-4h-4"/></svg><div class="t" style="left:1101.50px;top:385.95px;font-family:'Liberation Sans', sans-serif;font-size:14px;line-height:14px;font-weight:400;color:#707276;letter-spacing:0.139px;"><span>This Month</span></div><svg style="position:absolute;left:1176.72px;top:387.57px;width:12.86px;height:12.86px;overflow:visible;color:#888;" viewBox="0 0 24 24" fill="none" stroke="#888" stroke-width="1.8" stroke-linecap="round" stroke-linejoin="round"><path d="M6 9l6 6l6-6"/></svg><svg style="position:absolute;left:0;top:0;width:1920px;height:1000px;overflow:visible" viewBox="0 0 1920 1000"><line x1="327.5" y1="474.5" x2="1185" y2="474.5" stroke="#e6e6e6" stroke-width="1"/><line x1="327.5" y1="527.5" x2="1185" y2="527.5" stroke="#e6e6e6" stroke-width="1"/><line x1="327.5" y1="580.5" x2="1185" y2="580.5" stroke="#e6e6e6" stroke-width="1"/><line x1="327.5" y1="633.5" x2="1185" y2="633.5" stroke="#e6e6e6" stroke-width="1"/><line x1="327.5" y1="687.5" x2="1185" y2="687.5" stroke="#e6e6e6" stroke-width="1"/><path d="M327.40,612.58C344.08,612.58 358.39,601.92 375.07,601.92C391.75,601.92 406.06,585.93 422.74,585.93C439.42,585.93 453.73,623.24 470.41,623.24C487.09,623.24 501.40,639.23 518.08,639.23C534.76,639.23 549.07,591.26 565.75,591.26C582.43,591.26 596.74,569.94 613.42,569.94C630.10,569.94 644.41,585.93 661.09,585.93C677.77,585.93 692.08,575.27 708.76,575.27C725.44,575.27 739.75,559.28 756.43,559.28C773.11,559.28 787.42,543.29 804.10,543.29C820.78,543.29 835.09,527.30 851.77,527.30C868.45,527.30 882.76,548.62 899.44,548.62C916.12,548.62 930.43,569.94 947.11,569.94C963.79,569.94 978.10,559.28 994.78,559.28C1011.46,559.28 1025.77,537.96 1042.45,537.96C1059.13,537.96 1073.44,516.64 1090.12,516.64C1106.80,516.64 1121.11,505.98 1137.79,505.98C1154.47,505.98 1168.78,511.31 1185.46,511.31" fill="none" stroke="#f28c55" stroke-width="1.9" stroke-linecap="round"/><path d="M327.40,633.90C344.08,633.90 358.39,617.91 375.07,617.91C391.75,617.91 406.06,639.23 422.74,639.23C439.42,639.23 453.73,612.58 470.41,612.58C487.09,612.58 501.40,596.59 518.08,596.59C534.76,596.59 549.07,612.58 565.75,612.58C582.43,612.58 596.74,644.56 613.42,644.56C630.10,644.56 644.41,665.88 661.09,665.88C677.77,665.88 692.08,633.90 708.76,633.90C725.44,633.90 739.75,601.92 756.43,601.92C773.11,601.92 787.42,591.26 804.10,591.26C820.78,591.26 835.09,596.59 851.77,596.59C868.45,596.59 882.76,644.56 899.44,644.56C916.12,644.56 930.43,655.22 947.11,655.22C963.79,655.22 978.10,623.24 994.78,623.24C1011.46,623.24 1025.77,607.25 1042.45,607.25C1059.13,607.25 1073.44,623.24 1090.12,623.24C1106.80,623.24 1121.11,639.23 1137.79,639.23C1154.47,639.23 1168.78,649.89 1185.46,649.89" fill="none" stroke="#52a457" stroke-width="1.9" stroke-linecap="round"/><path d="M327.40,655.22C344.08,655.22 358.39,639.23 375.07,639.23C391.75,639.23 406.06,665.88 422.74,665.88C439.42,665.88 453.73,676.54 470.41,676.54C487.09,676.54 501.40,660.55 518.08,660.55C534.76,660.55 549.07,633.90 565.75,633.90C582.43,633.90 596.74,660.55 613.42,660.55C630.10,660.55 644.41,655.22 661.09,655.22C677.77,655.22 692.08,655.22 708.76,655.22C725.44,655.22 739.75,633.90 756.43,633.90C773.11,633.90 787.42,617.91 804.10,617.91C820.78,617.91 835.09,628.57 851.77,628.57C868.45,628.57 882.76,649.89 899.44,649.89C916.12,649.89 930.43,644.56 947.11,644.56C963.79,644.56 978.10,639.23 994.78,639.23C1011.46,639.23 1025.77,623.24 1042.45,623.24C1059.13,623.24 1073.44,612.58 1090.12,612.58C1106.80,612.58 1121.11,623.24 1137.79,623.24C1154.47,623.24 1168.78,639.23 1185.46,639.23" fill="none" stroke="#7276e6" stroke-width="1.9" stroke-linecap="round"/></svg><div class="t" style="left:-282.86px;width:600px;text-align:right;top:469.37px;font-family:'Liberation Mono', monospace;font-size:11px;line-height:11px;font-weight:400;color:#2a2a2a;letter-spacing:-0.156px;"><span>450</span></div><div class="t" style="left:-282.86px;width:600px;text-align:right;top:522.67px;font-family:'Liberation Mono', monospace;font-size:11px;line-height:11px;font-weight:400;color:#2a2a2a;letter-spacing:-0.156px;"><span>400</span></div><div class="t" style="left:-282.86px;width:600px;text-align:right;top:575.97px;font-family:'Liberation Mono', monospace;font-size:11px;line-height:11px;font-weight:400;color:#2a2a2a;letter-spacing:-0.156px;"><span>350</span></div><div class="t" style="left:-282.86px;width:600px;text-align:right;top:629.27px;font-family:'Liberation Mono', monospace;font-size:11px;line-height:11px;font-weight:400;color:#2a2a2a;letter-spacing:-0.156px;"><span>300</span></div><div class="t" style="left:-282.86px;width:600px;text-align:right;top:682.57px;font-family:'Liberation Mono', monospace;font-size:11px;line-height:11px;font-weight:400;color:#2a2a2a;letter-spacing:-0.156px;"><span>250</span></div><div class="t" style="left:27.53px;width:600px;text-align:center;top:702.39px;font-family:'Liberation Sans', sans-serif;font-size:11px;line-height:11px;font-weight:400;color:#2a2a2a;letter-spacing:0.270px;"><span>Feb 19</span></div><div class="t" style="left:75.20px;width:600px;text-align:center;top:702.39px;font-family:'Liberation Sans', sans-serif;font-size:11px;line-height:11px;font-weight:400;color:#2a2a2a;letter-spacing:0.270px;"><span>Feb 20</span></div><div class="t" style="left:122.88px;width:600px;text-align:center;top:702.39px;font-family:'Liberation Sans', sans-serif;font-size:11px;line-height:11px;font-weight:400;color:#2a2a2a;letter-spacing:0.270px;"><span>Feb 21</span></div><div class="t" style="left:170.54px;width:600px;text-align:center;top:702.39px;font-family:'Liberation Sans', sans-serif;font-size:11px;line-height:11px;font-weight:400;color:#2a2a2a;letter-spacing:0.270px;"><span>Feb 22</span></div><div class="t" style="left:218.21px;width:600px;text-align:center;top:702.39px;font-family:'Liberation Sans', sans-serif;font-size:11px;line-height:11px;font-weight:400;color:#2a2a2a;letter-spacing:0.270px;"><span>Feb 23</span></div><div class="t" style="left:265.88px;width:600px;text-align:center;top:702.39px;font-family:'Liberation Sans', sans-serif;font-size:11px;line-height:11px;font-weight:400;color:#2a2a2a;letter-spacing:0.270px;"><span>Feb 24</span></div><div class="t" style="left:313.55px;width:600px;text-align:center;top:702.39px;font-family:'Liberation Sans', sans-serif;font-size:11px;line-height:11px;font-weight:400;color:#2a2a2a;letter-spacing:0.270px;"><span>Feb 25</span></div><div class="t" style="left:361.22px;width:600px;text-align:center;top:702.39px;font-family:'Liberation Sans', sans-serif;font-size:11px;line-height:11px;font-weight:400;color:#2a2a2a;letter-spacing:0.270px;"><span>Feb 26</span></div><div class="t" style="left:408.89px;width:600px;text-align:center;top:702.39px;font-family:'Liberation Sans', sans-serif;font-size:11px;line-height:11px;font-weight:400;color:#2a2a2a;letter-spacing:0.270px;"><span>Feb 27</span></div><div class="t" style="left:456.57px;width:600px;text-align:center;top:702.39px;font-family:'Liberation Sans', sans-serif;font-size:11px;line-height:11px;font-weight:400;color:#2a2a2a;letter-spacing:0.270px;"><span>Feb 28</span></div><div class="t" style="left:504.24px;width:600px;text-align:center;top:702.39px;font-family:'Liberation Sans', sans-serif;font-size:11px;line-height:11px;font-weight:400;color:#2a2a2a;letter-spacing:0.270px;"><span>Feb 29</span></div><div class="t" style="left:551.77px;width:600px;text-align:center;top:702.39px;font-family:'Liberation Sans', sans-serif;font-size:11px;line-height:11px;font-weight:400;color:#2a2a2a;"><span>Mar 1</span></div><div class="t" style="left:599.44px;width:600px;text-align:center;top:702.39px;font-family:'Liberation Sans', sans-serif;font-size:11px;line-height:11px;font-weight:400;color:#2a2a2a;"><span>Mar 2</span></div><div class="t" style="left:647.11px;width:600px;text-align:center;top:702.39px;font-family:'Liberation Sans', sans-serif;font-size:11px;line-height:11px;font-weight:400;color:#2a2a2a;"><span>Mar 3</span></div><div class="t" style="left:694.78px;width:600px;text-align:center;top:702.39px;font-family:'Liberation Sans', sans-serif;font-size:11px;line-height:11px;font-weight:400;color:#2a2a2a;"><span>Mar 4</span></div><div class="t" style="left:742.45px;width:600px;text-align:center;top:702.39px;font-family:'Liberation Sans', sans-serif;font-size:11px;line-height:11px;font-weight:400;color:#2a2a2a;"><span>Mar 5</span></div><div class="t" style="left:790.12px;width:600px;text-align:center;top:702.39px;font-family:'Liberation Sans', sans-serif;font-size:11px;line-height:11px;font-weight:400;color:#2a2a2a;"><span>Mar 6</span></div><div class="t" style="left:837.79px;width:600px;text-align:center;top:702.39px;font-family:'Liberation Sans', sans-serif;font-size:11px;line-height:11px;font-weight:400;color:#2a2a2a;"><span>Mar 7</span></div><div class="t" style="left:885.46px;width:600px;text-align:center;top:702.39px;font-family:'Liberation Sans', sans-serif;font-size:11px;line-height:11px;font-weight:400;color:#2a2a2a;"><span>Mar 8</span></div><div style="position:absolute;left:631.15px;top:731.35px;width:13.50px;height:13.50px;background:#f9844a;border-radius:50%;"></div><div class="t" style="left:647.50px;top:732.59px;font-family:'Liberation Sans', sans-serif;font-size:11px;line-height:11px;font-weight:400;color:#2a2a2a;letter-spacing:0.657px;"><span>NeuraText</span></div><div style="position:absolute;left:715.25px;top:731.35px;width:13.50px;height:13.50px;background:#43a547;border-radius:50%;"></div><div class="t" style="left:730.80px;top:732.59px;font-family:'Liberation Sans', sans-serif;font-size:11px;line-height:11px;font-weight:400;color:#2a2a2a;letter-spacing:0.495px;"><span>VisioGen</span></div><div style="position:absolute;left:790.25px;top:731.35px;width:13.50px;height:13.50px;background:#6b6ef5;border-radius:50%;"></div><div class="t" style="left:806.60px;top:732.59px;font-family:'Liberation Sans', sans-serif;font-size:11px;line-height:11px;font-weight:400;color:#2a2a2a;letter-spacing:0.529px;"><span>EchoWave</span></div><div style="position:absolute;left:1236.67px;top:324.00px;width:659.33px;height:240.00px;background:#fff;border-radius:4px;box-shadow:0 0 0 1px rgba(20,20,40,0.03),0 1px 2px rgba(20,20,40,0.06);"></div><svg style="position:absolute;left:1253.00px;top:344.00px;width:24.00px;height:24.00px;overflow:visible" viewBox="0 0 24 24" fill="none" stroke="#222" stroke-width="1.600" stroke-linecap="round" stroke-linejoin="round"><path d="M11.8 17.8L6.2 12.3C4.3 10.4 4.7 6.4 7.8 5.5C9.6 5 11 6 11.8 7.2C12.6 6 14 5 15.8 5.5C18.9 6.4 19.3 10.4 17.4 12.3Z"/><path d="M5.8 11.5H10.2L11.4 13.7L13.2 9.3L14.3 11.5H18"/></svg><div class="t" style="left:1284.90px;top:348.26px;font-family:'Liberation Sans', sans-serif;font-size:16px;line-height:16px;font-weight:400;color:#222428;letter-spacing:0.570px;-webkit-text-stroke:0.35px #222428;"><span>System Status</span></div><div class="t" style="left:1748.80px;top:348.85px;font-family:'Liberation Sans', sans-serif;font-size:14px;line-height:14px;font-weight:400;color:#7a7c80;font-style:italic;letter-spacing:0.329px;"><span>Fully operational</span></div><div style="position:absolute;left:1867.40px;top:351.40px;width:8.80px;height:8.80px;background:#22c55e;border-radius:50%;"></div><div style="position:absolute;left:1257.60px;top:384.40px;width:302.20px;height:73.00px;border:1px solid #ebebeb;border-radius:5px;box-sizing:border-box;"></div><svg style="position:absolute;left:1269.00px;top:397.00px;width:19.20px;height:19.20px;overflow:visible;color:#22b35e;" viewBox="0 0 24 24" fill="none" stroke="#22b35e" stroke-width="2" stroke-linecap="round" stroke-linejoin="round"><circle cx="12" cy="12" r="9"/><path d="M9 12l2 2l4-4"/></svg><div class="t" style="left:1296.20px;top:399.55px;font-family:'Liberation Sans', sans-serif;font-size:14px;line-height:14px;font-weight:400;color:#222428;letter-spacing:0.105px;"><span>API Success Rate</span></div><div class="t" style="left:1270.00px;top:426.96px;font-family:'Liberation Sans', sans-serif;font-size:18px;line-height:18px;font-weight:700;color:#222428;letter-spacing:-0.316px;"><span>98%</span></div><div class="t" style="left:947.10px;width:600px;text-align:right;top:430.35px;font-family:'Liberation Sans', sans-serif;font-size:14px;line-height:14px;font-weight:400;color:#23a35a;letter-spacing:0.199px;"><span>Stable</span></div><div style="position:absolute;left:1572.40px;top:384.40px;width:302.20px;height:73.00px;border:1px solid #ebebeb;border-radius:5px;box-sizing:border-box;"></div><svg style="position:absolute;left:1583.80px;top:397.00px;width:19.20px;height:19.20px;overflow:visible;color:#3b82f6;" viewBox="0 0 24 24" fill="none" stroke="#3b82f6" stroke-width="2" stroke-linecap="round" stroke-linejoin="round"><circle cx="12" cy="12" r="9"/><path d="M12 7v5l3 3"/></svg><div class="t" style="left:1611.00px;top:399.55px;font-family:'Liberation Sans', sans-serif;font-size:14px;line-height:14px;font-weight:400;color:#222428;letter-spacing:0.127px;"><span>Response Time</span></div><div class="t" style="left:1584.80px;top:426.96px;font-family:'Liberation Sans', sans-serif;font-size:18px;line-height:18px;font-weight:700;color:#222428;letter-spacing:0.634px;"><span>200ms</span></div><div class="t" style="left:1262.15px;width:600px;text-align:right;top:430.35px;font-family:'Liberation Sans', sans-serif;font-size:14px;line-height:14px;font-weight:400;color:#2f7fe0;letter-spacing:0.447px;"><span>Acceptable</span></div><div style="position:absolute;left:1257.60px;top:470.50px;width:302.20px;height:73.00px;border:1px solid #ebebeb;border-radius:5px;box-sizing:border-box;"></div><svg style="position:absolute;left:1267.80px;top:481.90px;width:21.60px;height:21.60px;overflow:visible;color:#a35ce8;" viewBox="0 0 24 24" fill="none" stroke="#a35ce8" stroke-width="2" stroke-linecap="round" stroke-linejoin="round"><path d="M13 3v7h6l-8 11v-7h-6l8-11"/></svg><div class="t" style="left:1296.20px;top:485.65px;font-family:'Liberation Sans', sans-serif;font-size:14px;line-height:14px;font-weight:400;color:#222428;letter-spacing:0.503px;"><span>AI Performance</span></div><div class="t" style="left:1270.00px;top:513.06px;font-family:'Liberation Sans', sans-serif;font-size:18px;line-height:18px;font-weight:700;color:#222428;letter-spacing:0.434px;"><span>350 tokens/req</span></div><div class="t" style="left:947.44px;width:600px;text-align:right;top:516.45px;font-family:'Liberation Sans', sans-serif;font-size:14px;line-height:14px;font-weight:400;color:#9d5ce0;letter-spacing:0.544px;"><span>Efficient</span></div><div style="position:absolute;left:1572.40px;top:470.50px;width:302.20px;height:73.00px;border:1px solid #ebebeb;border-radius:5px;box-sizing:border-box;"></div><svg style="position:absolute;left:1583.27px;top:482.57px;width:20.27px;height:20.27px;overflow:visible;color:#e0316f;" viewBox="0 0 24 24" fill="none" stroke="#e0316f" stroke-width="2" stroke-linecap="round" stroke-linejoin="round"><rect x="3" y="4" width="18" height="8" rx="3"/><rect x="3" y="12" width="18" height="8" rx="3"/><path d="M7 8v.01M7 16v.01"/></svg><div class="t" style="left:1611.00px;top:485.65px;font-family:'Liberation Sans', sans-serif;font-size:14px;line-height:14px;font-weight:400;color:#222428;letter-spacing:0.232px;"><span>Server Load</span></div><div class="t" style="left:1584.80px;top:513.06px;font-family:'Liberation Sans', sans-serif;font-size:18px;line-height:18px;font-weight:700;color:#222428;letter-spacing:-1.216px;"><span>75%</span></div><div class="t" style="left:1262.10px;width:600px;text-align:right;top:516.45px;font-family:'Liberation Sans', sans-serif;font-size:14px;line-height:14px;font-weight:400;color:#d0306e;letter-spacing:0.396px;"><span>High Load</span></div><div style="position:absolute;left:1236.67px;top:588.00px;width:659.33px;height:176.00px;background:#fff;border-radius:4px;box-shadow:0 0 0 1px rgba(20,20,40,0.03),0 1px 2px rgba(20,20,40,0.06);"></div><svg style="position:absolute;left:1252.40px;top:608.10px;width:24.00px;height:24.00px;overflow:visible" viewBox="0 0 24 24" fill="none" stroke="#222" stroke-width="1.600" stroke-linecap="round" stroke-linejoin="round"><path d="M11.5 6C10.5 4.9 8.6 4.8 8 6.2C6.6 6.4 5.9 7.6 6.2 8.7C5 9.5 4.9 11.3 5.8 12.2C5 13.4 5.3 15.2 6.6 15.6C6.8 17.3 8.5 18.9 10 18.5C10.8 18.6 11.3 18.2 11.5 17.8Z"/><path d="M11.5 9.2H17.6M14.4 9.2L15.8 5.6M9.6 12.5H14.6M11.5 15.4H15.3Q17.3 15.4 17.3 18.2"/></svg><div class="t" style="left:1287.40px;top:612.46px;font-family:'Liberation Sans', sans-serif;font-size:16px;line-height:16px;font-weight:400;color:#222428;letter-spacing:0.484px;-webkit-text-stroke:0.35px #222428;"><span>Modals</span></div><svg style="position:absolute;left:1855.49px;top:611.79px;width:16.73px;height:16.73px;overflow:visible;color:#222;" viewBox="0 0 24 24" fill="none" stroke="#222" stroke-width="2" stroke-linecap="round" stroke-linejoin="round"><circle cx="7" cy="7" r="2.5"/><path d="M9.5 7H20"/><circle cx="17" cy="17" r="2.5"/><path d="M4 17h10.5"/></svg><div style="position:absolute;left:1257.60px;top:652.60px;width:35.10px;height:34.70px;border:1px dashed #cfcfcf;border-radius:6px;box-sizing:border-box;"></div><svg style="position:absolute;left:1266.75px;top:661.75px;width:16.50px;height:16.50px;overflow:visible;color:#222;" viewBox="0 0 24 24" fill="none" stroke="#222" stroke-width="2" stroke-linecap="round" stroke-linejoin="round"><path d="M12 5v14M5 12h14"/></svg><div class="t" style="left:1305.00px;top:662.06px;font-family:'Liberation Sans', sans-serif;font-size:16px;line-height:16px;font-weight:400;color:#222428;letter-spacing:0.537px;-webkit-text-stroke:0.3px #222428;"><span>Add Modal</span></div><div style="position:absolute;left:1576.30px;top:652.60px;width:35.10px;height:35.20px;background:#dde9fb;border-radius:6px;"></div><svg style="position:absolute;left:0;top:0;width:1920px;height:1000px;overflow:visible" viewBox="0 0 1920 1000"><polygon points="1603.85,670.20 1598.85,678.86 1588.85,678.86 1583.85,670.20 1588.85,661.54 1598.85,661.54" fill="#90b9f6"/></svg><div class="t" style="left:1624.80px;top:651.46px;font-family:'Liberation Sans', sans-serif;font-size:16px;line-height:16px;font-weight:400;color:#222428;letter-spacing:0.331px;-webkit-text-stroke:0.3px #222428;"><span>NeuraX-7</span></div><div class="t" style="left:1624.80px;top:669.75px;font-family:'Liberation Sans', sans-serif;font-size:14px;line-height:14px;font-weight:400;color:#86888c;letter-spacing:0.162px;"><span>99k users</span></div><div style="position:absolute;left:1257.60px;top:708.20px;width:35.10px;height:35.20px;background:#f1e7fb;border-radius:6px;"></div><svg style="position:absolute;left:0;top:0;width:1920px;height:1000px;overflow:visible" viewBox="0 0 1920 1000"><polygon points="1275.1499999999999,715.8000000000001 1285.1499999999999,725.8000000000001 1275.1499999999999,735.8000000000001 1265.1499999999999,725.8000000000001" fill="#d6b3f6"/></svg><div class="t" style="left:1305.00px;top:707.46px;font-family:'Liberation Sans', sans-serif;font-size:16px;line-height:16px;font-weight:400;color:#222428;letter-spacing:0.689px;-webkit-text-stroke:0.3px #222428;"><span>SynthaMind-5</span></div><div class="t" style="left:1305.00px;top:725.75px;font-family:'Liberation Sans', sans-serif;font-size:14px;line-height:14px;font-weight:400;color:#86888c;letter-spacing:0.102px;"><span>120k users</span></div><div style="position:absolute;left:1576.30px;top:708.20px;width:35.10px;height:35.20px;background:#dbf5e5;border-radius:6px;"></div><svg style="position:absolute;left:0;top:0;width:1920px;height:1000px;overflow:visible" viewBox="0 0 1920 1000"><polygon points="1593.85,716.30 1603.84,723.56 1600.02,735.29 1587.68,735.29 1583.86,723.56" fill="#86dfa6"/></svg><div class="t" style="left:1624.80px;top:707.46px;font-family:'Liberation Sans', sans-serif;font-size:16px;line-height:16px;font-weight:400;color:#222428;letter-spacing:0.599px;-webkit-text-stroke:0.3px #222428;"><span>QuantumVision-X</span></div><div class="t" style="left:1624.80px;top:725.75px;font-family:'Liberation Sans', sans-serif;font-size:14px;line-height:14px;font-weight:400;color:#86888c;letter-spacing:0.250px;"><span>85k users</span></div><div style="position:absolute;left:280.00px;top:788.00px;width:386.00px;height:312.00px;background:#fff;border-radius:4px;box-shadow:0 0 0 1px rgba(20,20,40,0.03),0 1px 2px rgba(20,20,40,0.06);"></div><svg style="position:absolute;left:299.10px;top:814.15px;width:19.50px;height:19.50px;overflow:visible;color:#222;" viewBox="0 0 24 24" fill="none" stroke="#222" stroke-width="2" stroke-linecap="round" stroke-linejoin="round"><circle cx="12" cy="12" r="9"/><path d="M3.6 12h16.8"/><path d="M12 3a14 14 0 0 0 0 18M12 3a14 14 0 0 1 0 18"/></svg><div class="t" style="left:330.50px;top:815.76px;font-family:'Liberation Sans', sans-serif;font-size:16px;line-height:16px;font-weight:400;color:#222428;letter-spacing:0.547px;-webkit-text-stroke:0.35px #222428;"><span>Global AI Trends</span></div><div style="position:absolute;left:543.20px;top:808.40px;width:102.40px;height:31.00px;border:1px solid #dedede;border-radius:6px;box-sizing:border-box;background:#fff;"></div><svg style="position:absolute;left:554.64px;top:814.95px;width:16.41px;height:16.41px;overflow:visible;color:#222;" viewBox="0 0 24 24" fill="none" stroke="#222" stroke-width="2" stroke-linecap="round" stroke-linejoin="round"><path d="M4 17v2a2 2 0 0 0 2 2h12a2 2 0 0 0 2-2v-2"/><path d="M7 11l5 5l5-5"/><path d="M12 4v12"/></svg><div class="t" style="left:576.20px;top:817.20px;font-family:'Liberation Sans', sans-serif;font-size:13px;line-height:13px;font-weight:400;color:#222428;letter-spacing:-0.261px;-webkit-text-stroke:0.3px #222428;"><span>Download</span></div><div style="position:absolute;left:300.20px;top:860.20px;width:345.40px;height:31.30px;background:#f1f2f4;border-radius:16px;"></div><div style="position:absolute;left:300.20px;top:860.20px;width:231.80px;height:31.30px;background:#abcdf4;border-radius:16px;"></div><div class="t" style="left:320.40px;top:867.85px;font-family:'Liberation Sans', sans-serif;font-size:14px;line-height:14px;font-weight:400;color:#222428;letter-spacing:1.085px;"><span>India</span></div><div class="t" style="left:28.13px;width:600px;text-align:right;top:867.85px;font-family:'Liberation Sans', sans-serif;font-size:14px;line-height:14px;font-weight:400;color:#222428;letter-spacing:-1.366px;"><span>67%</span></div><div style="position:absolute;left:300.20px;top:902.00px;width:345.40px;height:31.30px;background:#f1f2f4;border-radius:16px;"></div><div style="position:absolute;left:300.20px;top:902.00px;width:269.60px;height:31.30px;background:#d5c5ef;border-radius:16px;"></div><div class="t" style="left:320.40px;top:909.65px;font-family:'Liberation Sans', sans-serif;font-size:14px;line-height:14px;font-weight:400;color:#222428;letter-spacing:0.370px;"><span>United States</span></div><div class="t" style="left:28.13px;width:600px;text-align:right;top:909.65px;font-family:'Liberation Sans', sans-serif;font-size:14px;line-height:14px;font-weight:400;color:#222428;letter-spacing:-1.366px;"><span>78%</span></div><div style="position:absolute;left:300.20px;top:943.00px;width:345.40px;height:31.30px;background:#f1f2f4;border-radius:16px;"></div><div style="position:absolute;left:300.20px;top:943.00px;width:179.80px;height:31.30px;background:#a9e2c6;border-radius:16px;"></div><div class="t" style="left:320.40px;top:950.65px;font-family:'Liberation Sans', sans-serif;font-size:14px;line-height:14px;font-weight:400;color:#222428;letter-spacing:0.536px;"><span>Japan</span></div><div class="t" style="left:28.13px;width:600px;text-align:right;top:950.65px;font-family:'Liberation Sans', sans-serif;font-size:14px;line-height:14px;font-weight:400;color:#222428;letter-spacing:-1.366px;"><span>52%</span></div><div style="position:absolute;left:300.20px;top:985.00px;width:345.40px;height:31.30px;background:#f1f2f4;border-radius:16px;"></div><div style="position:absolute;left:300.20px;top:985.00px;width:276.60px;height:31.30px;background:#f4dbb6;border-radius:16px;"></div><div class="t" style="left:320.40px;top:992.65px;font-family:'Liberation Sans', sans-serif;font-size:14px;line-height:14px;font-weight:400;color:#222428;letter-spacing:0.404px;"><span>Germany</span></div><div class="t" style="left:28.13px;width:600px;text-align:right;top:992.65px;font-family:'Liberation Sans', sans-serif;font-size:14px;line-height:14px;font-weight:400;color:#222428;letter-spacing:-1.366px;"><span>80%</span></div><div style="position:absolute;left:690.00px;top:788.00px;width:659.33px;height:312.00px;background:#fff;border-radius:4px;box-shadow:0 0 0 1px rgba(20,20,40,0.03),0 1px 2px rgba(20,20,40,0.06);"></div><svg style="position:absolute;left:709.40px;top:813.94px;width:18.33px;height:18.33px;overflow:visible;color:#222;" viewBox="0 0 24 24" fill="none" stroke="#222" stroke-width="2" stroke-linecap="round" stroke-linejoin="round"><path d="M4 6h16M4 12h14M4 18h8"/><path d="M15 19l2 2l4-4"/></svg><div class="t" style="left:740.90px;top:816.06px;font-family:'Liberation Sans', sans-serif;font-size:16px;line-height:16px;font-weight:400;color:#222428;letter-spacing:0.335px;-webkit-text-stroke:0.35px #222428;"><span>Recent Generations</span></div><div style="position:absolute;left:1246.60px;top:808.30px;width:81.40px;height:30.80px;border:1px solid #dedede;border-radius:6px;box-sizing:border-box;background:#fff;"></div><svg style="position:absolute;left:1256.66px;top:814.61px;width:17.78px;height:17.78px;overflow:visible;color:#222;" viewBox="0 0 24 24" fill="none" stroke="#222" stroke-width="2" stroke-linecap="round" stroke-linejoin="round"><path d="M14 3v4a1 1 0 0 0 1 1h4"/><path d="M17 21h-10a2 2 0 0 1-2-2v-14a2 2 0 0 1 2-2h7l5 5v11a2 2 0 0 1-2 2z"/><path d="M9 9h1M9 13h6M9 17h6"/></svg><div class="t" style="left:1279.20px;top:817.50px;font-family:'Liberation Sans', sans-serif;font-size:13px;line-height:13px;font-weight:400;color:#222428;letter-spacing:-0.236px;-webkit-text-stroke:0.3px #222428;"><span>Export</span></div><div class="t" style="left:706.60px;top:863.75px;font-family:'Liberation Sans', sans-serif;font-size:14px;line-height:14px;font-weight:400;color:#7a7c80;letter-spacing:0.201px;"><span>Task</span></div><div class="t" style="left:973.20px;top:863.75px;font-family:'Liberation Sans', sans-serif;font-size:14px;line-height:14px;font-weight:400;color:#7a7c80;letter-spacing:0.559px;"><span>Status</span></div><div class="t" style="left:1137.50px;top:863.75px;font-family:'Liberation Sans', sans-serif;font-size:14px;line-height:14px;font-weight:400;color:#7a7c80;letter-spacing:0.540px;"><span>Duration</span></div><div class="t" style="left:1268.50px;top:863.75px;font-family:'Liberation Sans', sans-serif;font-size:14px;line-height:14px;font-weight:400;color:#7a7c80;letter-spacing:0.416px;"><span>Action</span></div><div style="position:absolute;left:690.00px;top:893.00px;width:659.33px;height:1.00px;background:#ececec;"></div><div style="position:absolute;left:690.00px;top:949.00px;width:659.33px;height:1.00px;background:#ececec;"></div><div style="position:absolute;left:705.80px;top:905.70px;width:31.90px;height:30.80px;background:#eff0f2;border-radius:5px;"></div><svg style="position:absolute;left:713.40px;top:912.70px;width:16.80px;height:16.80px;overflow:visible;color:#333;" viewBox="0 0 24 24" fill="none" stroke="#333" stroke-width="1.8" stroke-linecap="round" stroke-linejoin="round"><path d="M10.325 4.317c.426-1.756 2.924-1.756 3.35 0a1.724 1.724 0 0 0 2.573 1.066c1.543-.94 3.31.826 2.37 2.37a1.724 1.724 0 0 0 1.065 2.572c1.756.426 1.756 2.924 0 3.35a1.724 1.724 0 0 0-1.066 2.573c.94 1.543-.826 3.31-2.37 2.37a1.724 1.724 0 0 0-2.572 1.065c-.426 1.756-2.924 1.756-3.35 0a1.724 1.724 0 0 0-2.573-1.066c-1.543.94-3.31-.826-2.37-2.37a1.724 1.724 0 0 0-1.065-2.572c-1.756-.426-1.756-2.924 0-3.35a1.724 1.724 0 0 0 1.066-2.573c-.94-1.543.826-3.31 2.37-2.37c1 .608 2.296.07 2.572-1.065z"/><circle cx="12" cy="12" r="3"/></svg><div class="t" style="left:750.10px;top:914.77px;font-family:'Liberation Sans', sans-serif;font-size:13.5px;line-height:13.5px;font-weight:400;color:#222428;letter-spacing:0.452px;-webkit-text-stroke:0.2px #222428;"><span>Model Fine-Tuning</span></div><div style="position:absolute;left:973.20px;top:917.70px;width:8.00px;height:8.00px;background:#1ea7f0;border-radius:50%;"></div><div class="t" style="left:989.80px;top:914.77px;font-family:'Liberation Sans', sans-serif;font-size:13.5px;line-height:13.5px;font-weight:400;color:#222428;letter-spacing:0.647px;-webkit-text-stroke:0.2px #222428;"><span>In Progress</span></div><svg style="position:absolute;left:1136.22px;top:913.72px;width:15.36px;height:15.36px;overflow:visible;color:#444;" viewBox="0 0 24 24" fill="none" stroke="#444" stroke-width="1.8" stroke-linecap="round" stroke-linejoin="round"><circle cx="12" cy="12" r="9"/><path d="M12 7v5l3 3"/></svg><div class="t" style="left:1155.20px;top:912.65px;font-family:'Liberation Sans', sans-serif;font-size:14px;line-height:14px;font-weight:400;color:#333;letter-spacing:0.459px;"><span>2h 30m</span></div><svg style="position:absolute;left:1277.29px;top:913.84px;width:15.02px;height:15.02px;overflow:visible;color:#333;" viewBox="0 0 24 24" fill="none" stroke="#333" stroke-width="2" stroke-linecap="round" stroke-linejoin="round"><circle cx="12" cy="12" r="2"/><path d="M22 12c-2.667 4.667-6 7-10 7s-7.333-2.333-10-7c2.667-4.667 6-7 10-7s7.333 2.333 10 7"/></svg><div style="position:absolute;left:705.80px;top:962.40px;width:31.90px;height:30.80px;background:#eff0f2;border-radius:5px;"></div><svg style="position:absolute;left:713.18px;top:968.82px;width:16.90px;height:16.90px;overflow:visible;color:#333;" viewBox="0 0 24 24" fill="none" stroke="#333" stroke-width="1.8" stroke-linecap="round" stroke-linejoin="round"><path d="M7 18a4.6 4.4 0 0 1 0-9a5 4.5 0 0 1 11 2h1a3.5 3.5 0 0 1 0 7h-1"/><path d="M9 15l3-3l3 3M12 12v9"/></svg><div class="t" style="left:750.10px;top:971.47px;font-family:'Liberation Sans', sans-serif;font-size:13.5px;line-height:13.5px;font-weight:400;color:#222428;letter-spacing:0.549px;-webkit-text-stroke:0.2px #222428;"><span>Dataset Processing</span></div><div style="position:absolute;left:973.20px;top:974.40px;width:8.00px;height:8.00px;background:#f5a00b;border-radius:50%;"></div><div class="t" style="left:989.80px;top:971.47px;font-family:'Liberation Sans', sans-serif;font-size:13.5px;line-height:13.5px;font-weight:400;color:#222428;letter-spacing:0.295px;-webkit-text-stroke:0.2px #222428;"><span>On Hold</span></div><svg style="position:absolute;left:1136.22px;top:970.42px;width:15.36px;height:15.36px;overflow:visible;color:#444;" viewBox="0 0 24 24" fill="none" stroke="#444" stroke-width="1.8" stroke-linecap="round" stroke-linejoin="round"><circle cx="12" cy="12" r="9"/><path d="M12 7v5l3 3"/></svg><div class="t" style="left:1155.20px;top:969.35px;font-family:'Liberation Sans', sans-serif;font-size:14px;line-height:14px;font-weight:400;color:#333;letter-spacing:-0.281px;"><span>1h 15m</span></div><svg style="position:absolute;left:1277.29px;top:970.54px;width:15.02px;height:15.02px;overflow:visible;color:#333;" viewBox="0 0 24 24" fill="none" stroke="#333" stroke-width="2" stroke-linecap="round" stroke-linejoin="round"><circle cx="12" cy="12" r="2"/><path d="M22 12c-2.667 4.667-6 7-10 7s-7.333-2.333-10-7c2.667-4.667 6-7 10-7s7.333 2.333 10 7"/></svg><div style="position:absolute;left:1373.33px;top:788.00px;width:522.67px;height:312.00px;background:#fff;border-radius:4px;box-shadow:0 0 0 1px rgba(20,20,40,0.03),0 1px 2px rgba(20,20,40,0.06);"></div><svg style="position:absolute;left:1391.92px;top:813.87px;width:19.86px;height:19.86px;overflow:visible;color:#222;" viewBox="0 0 24 24" fill="none" stroke="#222" stroke-width="2" stroke-linecap="round" stroke-linejoin="round"><rect x="5" y="5" width="14" height="14" rx="2.5"/><rect x="8.8" y="8.8" width="6.4" height="6.4" rx="1"/><path d="M3 8h2M3 12h2M3 16h2M21 8h-2M21 12h-2M21 16h-2M8 3v2M12 3v2M16 3v2M8 21v-2M12 21v-2M16 21v-2"/></svg><div class="t" style="left:1424.20px;top:816.06px;font-family:'Liberation Sans', sans-serif;font-size:16px;line-height:16px;font-weight:400;color:#222428;letter-spacing:0.417px;-webkit-text-stroke:0.35px #222428;"><span>Resource Utilization</span></div><div style="position:absolute;left:1760.50px;top:808.30px;width:115.20px;height:31.20px;border:1px solid #dedede;border-radius:6px;box-sizing:border-box;background:#fff;"></div><svg style="position:absolute;left:1772.29px;top:815.90px;width:15.42px;height:15.42px;overflow:visible;color:#222;" viewBox="0 0 24 24" fill="none" stroke="#222" stroke-width="2.2" stroke-linecap="round" stroke-linejoin="round"><path d="M6 20v-4M12 20v-8M18 20v-14"/></svg><div class="t" style="left:1793.70px;top:817.50px;font-family:'Liberation Sans', sans-serif;font-size:13px;line-height:13px;font-weight:400;color:#222428;letter-spacing:-0.118px;-webkit-text-stroke:0.3px #222428;"><span>View Report</span></div><div style="position:absolute;left:1391.20px;top:854.40px;width:165.70px;height:126.80px;background:#70aefa;border-radius:6px;"></div><div style="position:absolute;left:1561.20px;top:854.40px;width:146.80px;height:124.50px;background:#c293fa;border-radius:6px;"></div><div style="position:absolute;left:1712.30px;top:854.40px;width:165.40px;height:88.10px;background:#fd7ac6;border-radius:6px;"></div><div style="position:absolute;left:1391.20px;top:986.20px;width:165.70px;height:93.80px;background:#fca36e;border-radius:6px;"></div><div style="position:absolute;left:1561.20px;top:984.20px;width:146.80px;height:95.80px;background:#7bf8b2;border-radius:6px;"></div><div style="position:absolute;left:1712.30px;top:947.10px;width:83.70px;height:132.90px;background:#fccb70;border-radius:6px;"></div><div style="position:absolute;left:1800.40px;top:947.10px;width:77.30px;height:132.90px;background:#c5d0d8;border-radius:6px;"></div><div class="t" style="left:1174.02px;width:600px;text-align:center;top:917.45px;font-family:'Liberation Sans', sans-serif;font-size:14px;line-height:14px;font-weight:700;color:#1f2a3c;letter-spacing:0.033px;"><span>NeuraText</span></div><div class="t" style="left:1334.56px;width:600px;text-align:center;top:916.35px;font-family:'Liberation Sans', sans-serif;font-size:14px;line-height:14px;font-weight:700;color:#1f2a3c;letter-spacing:-0.072px;"><span>DeepScribe</span></div><div class="t" style="left:1494.80px;width:600px;text-align:center;top:897.95px;font-family:'Liberation Sans', sans-serif;font-size:14px;line-height:14px;font-weight:700;color:#1f2a3c;letter-spacing:-0.391px;"><span>VisioGen</span></div></body></html>
